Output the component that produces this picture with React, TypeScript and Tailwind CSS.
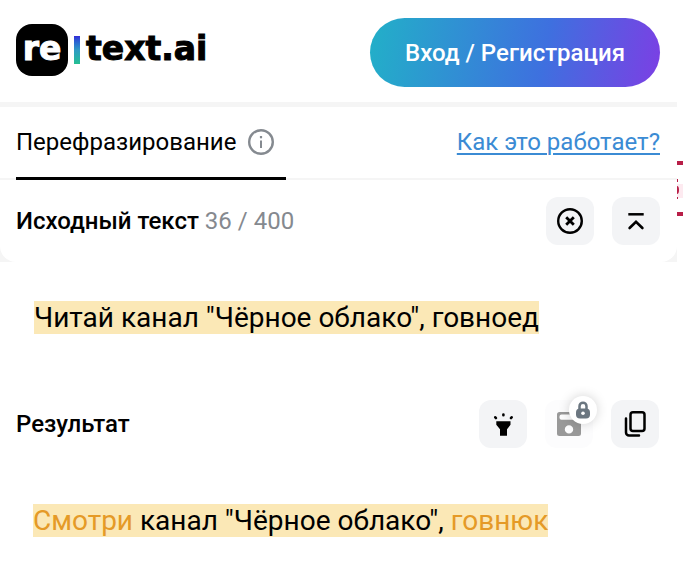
import type { ButtonHTMLAttributes } from "react";
import { clsx } from "clsx";

const MAX_LENGTH = 400;
const SOURCE = 'Читай канал "Чёрное облако", говноед';

type ResultPart = {
  text: string;
  changed?: boolean;
};

const RESULT: ResultPart[] = [
  { text: "Смотри", changed: true },
  { text: ' канал "Чёрное облако", ' },
  { text: "говнюк", changed: true },
];

function IconButton({
  className,
  ...props
}: ButtonHTMLAttributes<HTMLButtonElement>) {
  return (
    <button
      type="button"
      className={clsx(
        "flex size-12 items-center justify-center rounded-xl text-black",
        className ?? "bg-[#f3f4f6]"
      )}
      {...props}
    />
  );
}

function InfoIcon() {
  return (
    <svg viewBox="0 0 26 26" className="size-[26px]" fill="none" stroke="#858a90">
      <circle cx="13" cy="13" r="11.8" strokeWidth="2.4" />
      <path d="M13 11.5v7.5" strokeWidth="2" />
      <path d="M13 7v2.3" strokeWidth="2.2" />
    </svg>
  );
}

function ClearIcon() {
  return (
    <svg viewBox="0 0 28 28" className="size-7" fill="none" stroke="currentColor">
      <circle cx="14" cy="14" r="11.8" strokeWidth="2.4" />
      <path d="m10.2 10.2 7.6 7.6M17.8 10.2l-7.6 7.6" strokeWidth="2.8" />
    </svg>
  );
}

function CollapseIcon() {
  return (
    <svg viewBox="0 0 28 28" className="size-7" fill="none" stroke="currentColor">
      <path d="M6.3 7.3h15.4" strokeWidth="2.5" />
      <path
        d="m7.6 21 6.4-6.2 6.4 6.2"
        strokeWidth="2.6"
        strokeLinecap="round"
      />
    </svg>
  );
}

function HighlightIcon() {
  return (
    <svg viewBox="0 0 28 28" className="size-7" fill="currentColor">
      <path d="M7.3 11.2h14.2v3.6L18 19.300v6.500h-7v-6.500l-3.700-4.500z" />
      <path
        d="M14.400 4.500v.7M6.300 7.300l.6.700M22.600 7.300l-.6.700"
        stroke="currentColor"
        strokeWidth="2.600"
        strokeLinecap="round"
      />
    </svg>
  );
}

function SaveIcon() {
  return (
    <svg viewBox="0 0 24 24" className="size-6" fill="#999999">
      <path
        fillRule="evenodd"
        d="M2.5 0H18l6 6v15.500a2.500 2.500 0 0 1-2.500 2.500h-19A2.500 2.500 0 0 1 0 21.500v-19A2.500 2.500 0 0 1 2.500 0ZM4.500 2.500a2 2 0 0 0-2 2v1.200a2 2 0 0 0 2 2H17V2.500ZM12 13.200a4.200 4.200 0 1 0 0 8.400 4.200 4.200 0 0 0 0-8.400Z"
      />
    </svg>
  );
}

function LockIcon() {
  return (
    <svg viewBox="0 0 16 18" className="h-[18px] w-4">
      <path
        d="M4.500 9V5.200a3.500 3.500 0 0 1 7 0V9"
        fill="none"
        stroke="#6b7680"
        strokeWidth="2.500"
      />
      <rect x="1" y="7.500" width="14" height="10" rx="4" fill="#6b7680" />
      <circle cx="8" cy="12.300" r="1.800" fill="#ffffff" />
    </svg>
  );
}

function CopyIcon() {
  return (
    <svg
      viewBox="0 0 28 28"
      className="size-7"
      fill="none"
      stroke="currentColor"
      strokeWidth="2.500"
    >
      <rect x="9.500" y="2.300" width="14" height="18.700" rx="2.500" />
      <path
        d="M5 8.500V22.500a3 3 0 0 0 3 3H18"
        strokeLinecap="round"
      />
    </svg>
  );
}

function Logo() {
  return (
    <a
      href="/"
      className="flex items-center font-['DejaVu_Sans',sans-serif] text-[33px] leading-none font-bold text-black [-webkit-text-stroke:1px_currentColor]"
    >
      <span className="flex size-[52px] items-center justify-center rounded-2xl bg-black pb-1 text-white">
        re
      </span>
      <span className="ml-1.5 h-7 w-1.5 bg-linear-to-b from-[#3328d8] via-[#2f9ac4] to-[#26bf91]" />
      <span className="ml-1.5 pb-1">text.ai</span>
    </a>
  );
}

export default function App() {
  return (
    <div className="flex overflow-hidden bg-white font-['Roboto',sans-serif] text-black">
      <main className="min-w-0 flex-1">
        <header className="flex items-start justify-between border-b-[5px] border-[#f5f5f5] pt-[18px] pr-[17px] pb-[15px] pl-4">
          <div className="pt-1.5">
            <Logo />
          </div>
          <button
            type="button"
            className="h-[69px] rounded-full bg-linear-[100deg] from-[#22b0c8] via-[#3e70df] via-60% to-[#7c3fe4] px-[35px] text-2xl font-medium text-white"
          >
            Вход / Регистрация
          </button>
        </header>

        <div className="bg-[#f5f5f5]">
          <div className="rounded-b-2xl bg-white">
            <nav className="flex items-start justify-between border-b-2 border-[#f5f5f5] pr-[17px] pl-4 text-2xl">
              <button
                type="button"
                className="-mb-0.5 flex h-[73px] items-center gap-3 border-b-3 border-black pr-3"
              >
                Перефразирование
                <InfoIcon />
              </button>
              <a
                href="#how"
                className="flex h-[70px] items-center text-[#3b8bd4] underline decoration-2 underline-offset-3"
              >
                Как это работает?
              </a>
            </nav>

            <div className="flex items-center justify-between py-[17px] pr-[17px] pl-4">
              <h2 className="text-2xl font-medium">
                Исходный текст{" "}
                <span className="font-normal text-[#85898f]">
                  {SOURCE.length} / {MAX_LENGTH}
                </span>
              </h2>
              <div className="flex gap-[18px]">
                <IconButton aria-label="Очистить">
                  <ClearIcon />
                </IconButton>
                <IconButton aria-label="Свернуть">
                  <CollapseIcon />
                </IconButton>
              </div>
            </div>
          </div>
        </div>

        <p className="px-[34px] pt-9 pb-[62px] text-[28px] leading-10">
          <mark className="bg-[#fbe8b6] text-black">{SOURCE}</mark>
        </p>

        <div className="flex items-center justify-between pr-[18px] pl-4">
          <h2 className="text-2xl font-medium">Результат</h2>
          <div className="flex gap-[18px]">
            <IconButton aria-label="Подсветка">
              <HighlightIcon />
            </IconButton>
            <div className="relative">
              <IconButton aria-label="Сохранить" className="bg-[#fcfcfd]" disabled>
                <SaveIcon />
              </IconButton>
              <span className="absolute -top-1 -right-1 flex size-7 items-center justify-center rounded-full bg-white shadow-[0_0_12px_rgba(0,0,0,0.18)]">
                <LockIcon />
              </span>
            </div>
            <IconButton aria-label="Копировать">
              <CopyIcon />
            </IconButton>
          </div>
        </div>

        <p className="px-[33px] pt-[53px] pb-9 text-[28px] leading-10">
          <mark className="bg-[#fbe8b6] text-black">
            {RESULT.map((part) => (
              <span
                key={part.text}
                className={part.changed ? "text-[#e59a27]" : undefined}
              >
                {part.text}
              </span>
            ))}
          </mark>
        </p>
      </main>

      {/* edge of the side banner */}
      <aside className="w-1.5 pt-[161px]">
        <div className="h-[55px] overflow-hidden border-y-4 border-[#b81f48] pt-[13px]">
          <svg viewBox="0 0 6 24" className="h-6 w-1.5">
            <path d="M0 6h6v14H0z" fill="#fdeaf0" />
            <path d="M0 1h1v3H0zM0 8q2 0 2 4t-2 4zM0 19h1v2H0z" fill="#b81f48" />
          </svg>
        </div>
      </aside>
    </div>
  );
}
